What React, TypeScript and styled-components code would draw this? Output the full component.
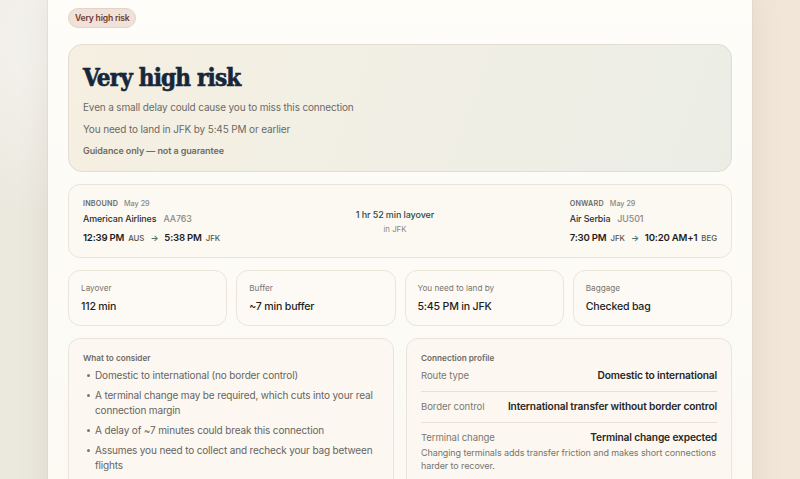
import React from "react";
import styled, { createGlobalStyle } from "styled-components";

const Global = createGlobalStyle`
  html, body { margin: 0; padding: 0; height: 100%; overflow: hidden; }
  body {
    font-family: Inter, "Noto Sans", sans-serif;
    background:
      radial-gradient(ellipse 320px 260px at 90px 40px, rgba(255,255,255,0.55), rgba(255,255,255,0) 70%),
      linear-gradient(90deg, #ebe8de 0%, #efe9df 45%, #f1e6d8 100%);
    color: #222;
    -webkit-font-smoothing: antialiased;
  }
`;

const Page = styled.div`
  display: flex;
  justify-content: center;
  padding: 0 48px;
  height: 479px;
`;

const Panel = styled.main`
  width: 704px;
  min-height: 540px;
  margin-top: -16px;
  padding: 24px 20px 20px;
  box-sizing: border-box;
  background: linear-gradient(180deg, #fefdf9 0%, #fcf9f3 100%);
  border-radius: 18px;
  box-shadow: 0 8px 30px rgba(120, 100, 70, 0.12), 0 0 0 1px rgba(230, 222, 206, 0.6);
  display: flex;
  flex-direction: column;
  gap: 12px;
  flex-shrink: 0;
  & > * { flex-shrink: 0; }
`;

const Badge = styled.span`
  align-self: flex-start;
  font-size: 8.6px;
  letter-spacing: -0.2px;
  font-weight: 600;
  color: #6f3a2e;
  background: #f1e2d9;
  border: 1px solid #e7d2c7;
  border-radius: 999px;
  padding: 4px 6px;
  line-height: 10px;
  height: 20px;
  box-sizing: border-box;
  margin-bottom: 4px;
`;

const Hero = styled.section`
  border: 1px solid #e2ddd0;
  border-radius: 14px;
  background: linear-gradient(110deg, #f6efe2 0%, #f1efe5 50%, #ebede5 100%);
  padding: 18px 14px 12px;
  height: 128px;
  box-sizing: border-box;
`;

const Title = styled.h1`
  margin: 0 0 7px;
  font-family: "DejaVu Serif Condensed", "DejaVu Serif", "Liberation Serif", serif;
  font-stretch: condensed;
  font-weight: 700;
  font-size: 24px;
  letter-spacing: -0.8px;
  line-height: 30px;
  color: #17263a;
  -webkit-text-stroke: 0.6px #17263a;
`;

const Lead = styled.p`
  margin: 0 0 8px;
  font-size: 10px;
  letter-spacing: -0.15px;
  color: #6c6a66;
  line-height: 14px;
`;

const Fine = styled.p`
  margin: 1px 0 0;
  font-size: 9px;
  letter-spacing: -0.1px;
  font-weight: 600;
  color: #6f6c66;
  line-height: 13px;
`;

const Card = styled.section`
  border: 1px solid #ebe5d9;
  border-radius: 12px;
  background: #fcf8f2;
  box-sizing: border-box;
`;

const FlightCard = styled(Card)`
  display: flex;
  justify-content: space-between;
  align-items: flex-start;
  padding: 14px 14px 10px;
  height: 74px;
`;

const Leg = styled.div`
  display: flex;
  flex-direction: column;
  gap: 3px;
`;

const LegHead = styled.div`
  display: flex;
  align-items: baseline;
  gap: 6px;
  font-size: 7.2px;
  line-height: 10px;
`;

const Kind = styled.span`
  font-weight: 600;
  color: #6a6a68;
  letter-spacing: 0.2px;
`;

const Muted = styled.span`
  color: #8b8983;
  font-weight: 500;
`;

const Carrier = styled.div`
  display: flex;
  align-items: baseline;
  gap: 7px;
  font-size: 8.9px;
  letter-spacing: -0.1px;
  line-height: 13px;
  font-weight: 500;
  color: #2b2b2b;
  & > span:last-child { color: #8a8882; font-weight: 500; }
`;

const Times = styled.div`
  display: flex;
  align-items: baseline;
  gap: 4px;
  font-size: 9.6px;
  letter-spacing: -0.2px;
  line-height: 14px;
  font-weight: 600;
  color: #1e1e1e;
  margin-top: 3px;
`;

const Code = styled.span`
  font-size: 7.8px;
  font-weight: 500;
  letter-spacing: 0;
  color: #55534f;
`;

const Arrow = styled.span`
  font-size: 8.5px;
  color: #4e6f64;
  margin: 0 2px;
`;

const Layover = styled.div`
  align-self: center;
  display: flex;
  flex-direction: column;
  align-items: center;
  gap: 3px;
  margin-top: -4px;
`;

const LayoverMain = styled.div`
  font-size: 9px;
  letter-spacing: -0.1px;
  font-weight: 500;
  color: #2f4a40;
  line-height: 13px;
`;

const LayoverSub = styled.div`
  font-size: 7.8px;
  color: #8a8882;
  line-height: 10px;
`;

const Stats = styled.div`
  display: grid;
  grid-template-columns: repeat(4, 1fr);
  gap: 9px;
`;

const Stat = styled(Card)`
  height: 56px;
  padding: 12px 12px;
  display: flex;
  flex-direction: column;
  gap: 5px;
  background: #fdfaf5;
`;

const StatLabel = styled.div`
  font-size: 8.2px;
  line-height: 11px;
  color: #77746e;
`;

const StatValue = styled.div`
  font-size: 10.6px;
  letter-spacing: -0.2px;
  line-height: 15px;
  font-weight: 500;
  color: #1f1f1f;
`;

const Split = styled.div`
  display: grid;
  grid-template-columns: 1fr 1fr;
  gap: 12px;
`;

const InfoCard = styled(Card)`
  padding: 13px 14px 14px;
  background: #fcf8f1;
  min-height: 180px;
`;

const InfoTitle = styled.div`
  font-size: 8.2px;
  line-height: 12px;
  font-weight: 600;
  color: #6d6a64;
  margin-bottom: 4px;
`;

const List = styled.ul`
  margin: 0;
  padding: 0 0 0 4px;
  list-style: none;
  display: flex;
  flex-direction: column;
  gap: 5px;
`;

const Item = styled.li`
  position: relative;
  font-size: 10px;
  letter-spacing: -0.15px;
  line-height: 15px;
  color: #66645f;
  padding-left: 8px;
  &::before {
    content: "";
    position: absolute;
    left: 0;
    top: 6px;
    width: 3px;
    height: 3px;
    border-radius: 50%;
    background: #7a7770;
  }
`;

const Row = styled.div<{ $first?: boolean; $last?: boolean }>`
  display: flex;
  justify-content: space-between;
  align-items: baseline;
  gap: 12px;
  padding: ${(p) => (p.$first ? "0" : "7px")} 0 8px;
  border-bottom: ${(p) => (p.$last ? "none" : "1px solid #e8e2d6")};
`;

const RowLabel = styled.span`
  font-size: 9.6px;
  letter-spacing: -0.1px;
  color: #7b7872;
  line-height: 14px;
  white-space: nowrap;
  flex-shrink: 0;
`;

const RowValue = styled.span`
  font-size: 10.2px;
  letter-spacing: -0.15px;
  font-weight: 600;
  color: #272624;
  line-height: 14px;
  text-align: right;
  white-space: nowrap;
`;

const RowNote = styled.p`
  margin: -7px 0 0;
  font-size: 9px;
  letter-spacing: -0.1px;
  line-height: 13px;
  color: #77746e;
`;

type LegProps = {
  kind: string;
  date: string;
  airline: string;
  flight: string;
  dep: string;
  from: string;
  arr: string;
  to: string;
};

const FlightLeg = ({ kind, date, airline, flight, dep, from, arr, to }: LegProps) => (
  <Leg>
    <LegHead>
      <Kind>{kind}</Kind>
      <Muted>{date}</Muted>
    </LegHead>
    <Carrier>
      <span>{airline}</span>
      <span>{flight}</span>
    </Carrier>
    <Times>
      <span>{dep}</span>
      <Code>{from}</Code>
      <Arrow>→</Arrow>
      <span>{arr}</span>
      <Code>{to}</Code>
    </Times>
  </Leg>
);

const stats = [
  { label: "Layover", value: "112 min" },
  { label: "Buffer", value: "~7 min buffer" },
  { label: "You need to land by", value: "5:45 PM in JFK" },
  { label: "Baggage", value: "Checked bag" },
];

const considerations = [
  "Domestic to international (no border control)",
  "A terminal change may be required, which cuts into your real connection margin",
  "A delay of ~7 minutes could break this connection",
  "Assumes you need to collect and recheck your bag between flights",
];

export default function App() {
  return (
    <>
      <Global />
      <Page>
        <Panel>
          <Badge>Very high risk</Badge>
          <Hero>
            <Title>Very high risk</Title>
            <Lead>Even a small delay could cause you to miss this connection</Lead>
            <Lead>You need to land in JFK by 5:45 PM or earlier</Lead>
            <Fine>Guidance only — not a guarantee</Fine>
          </Hero>

          <FlightCard>
            <FlightLeg
              kind="INBOUND"
              date="May 29"
              airline="American Airlines"
              flight="AA763"
              dep="12:39 PM"
              from="AUS"
              arr="5:38 PM"
              to="JFK"
            />
            <Layover>
              <LayoverMain>1 hr 52 min layover</LayoverMain>
              <LayoverSub>in JFK</LayoverSub>
            </Layover>
            <FlightLeg
              kind="ONWARD"
              date="May 29"
              airline="Air Serbia"
              flight="JU501"
              dep="7:30 PM"
              from="JFK"
              arr="10:20 AM+1"
              to="BEG"
            />
          </FlightCard>

          <Stats>
            {stats.map((s) => (
              <Stat key={s.label}>
                <StatLabel>{s.label}</StatLabel>
                <StatValue>{s.value}</StatValue>
              </Stat>
            ))}
          </Stats>

          <Split>
            <InfoCard>
              <InfoTitle>What to consider</InfoTitle>
              <List>
                {considerations.map((c) => (
                  <Item key={c}>{c}</Item>
                ))}
              </List>
            </InfoCard>
            <InfoCard>
              <InfoTitle>Connection profile</InfoTitle>
              <Row $first>
                <RowLabel>Route type</RowLabel>
                <RowValue>Domestic to international</RowValue>
              </Row>
              <Row>
                <RowLabel>Border control</RowLabel>
                <RowValue>International transfer without border control</RowValue>
              </Row>
              <Row $last>
                <RowLabel>Terminal change</RowLabel>
                <RowValue>Terminal change expected</RowValue>
              </Row>
              <RowNote>
                Changing terminals adds transfer friction and makes short connections harder to recover.
              </RowNote>
            </InfoCard>
          </Split>
        </Panel>
      </Page>
    </>
  );
}
